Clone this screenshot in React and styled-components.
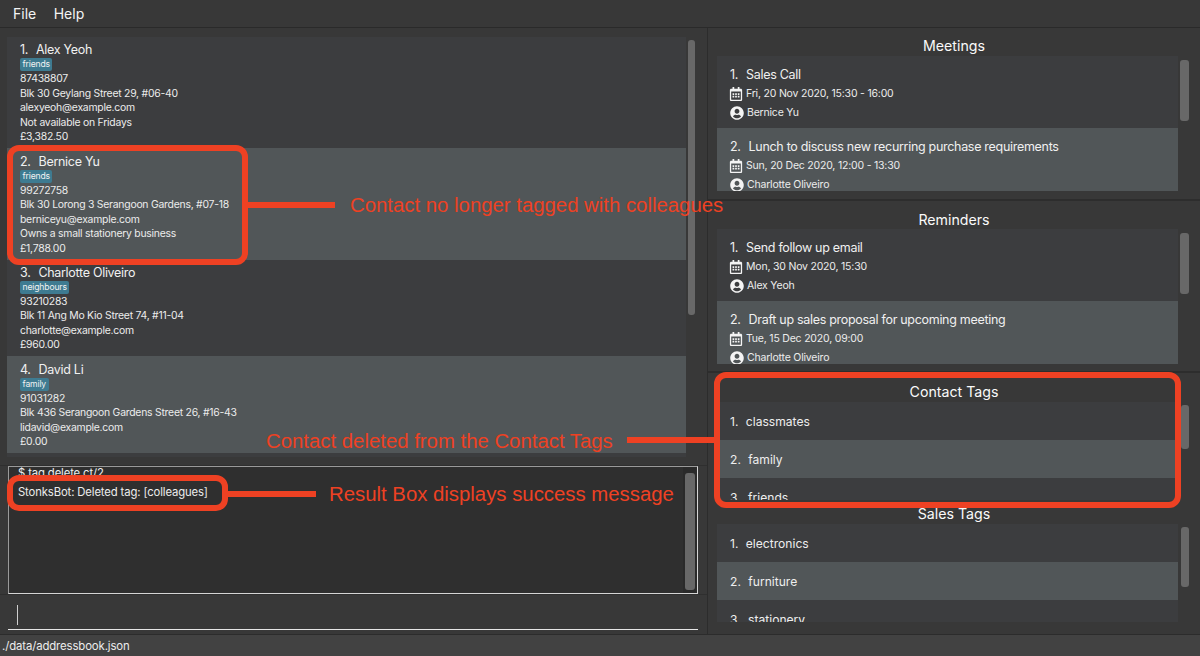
import React from 'react';
import styled, { createGlobalStyle } from 'styled-components';
import { FaRegCalendarAlt, FaUserCircle } from 'react-icons/fa';

const GlobalStyle = createGlobalStyle`
  html, body {
    margin: 0;
    padding: 0;
    background: #383838;
    overflow: hidden;
  }
  * { box-sizing: border-box; }
`;

const Window = styled.div`
  position: relative;
  width: 1200px;
  height: 656px;
  display: flex;
  flex-direction: column;
  background: #383838;
  color: #f0f0f0;
  font-family: Inter, "Liberation Sans", sans-serif;
  overflow: hidden;
`;

const MenuBar = styled.div`
  flex: none;
  height: 28px;
  display: flex;
  align-items: center;
  gap: 17.5px;
  padding: 0 0 1px 13px;
  border-bottom: 1px solid #2a2a2a;
  font-size: 14px;
  color: #f4f4f4;
`;

const Main = styled.div`
  flex: 1;
  min-height: 0;
  display: flex;
`;

const LeftColumn = styled.div`
  flex: none;
  width: 708px;
  display: flex;
  flex-direction: column;
  border-right: 1px solid #2c2c2c;
`;

const PersonPane = styled.div`
  flex: none;
  height: 438px;
  display: flex;
  padding: 9px 10px 0 7px;
  border-bottom: 1px solid #2f2f2f;
`;

const PersonList = styled.div`
  flex: none;
  width: 679px;
  height: 420px;
  background: #3c3d3f;
  overflow: hidden;
`;

const Track = styled.div`
  flex: 1;
  padding: ${p => p.$top}px ${p => p.$right}px 0 ${p => p.$left}px;
`;

const Thumb = styled.div`
  height: ${p => p.$height}px;
  background: #686868;
  border-radius: 3px;
`;

const PersonRow = styled.div`
  padding: 4.3px 0 3.5px 13px;
  background: ${p => (p.$alt ? '#515658' : '#3c3d3f')};
`;

const RowTitle = styled.div`
  font-size: 12.5px;
  line-height: 17px;
  letter-spacing: -0.3px;
  color: #f0f0f0;
  white-space: pre;
`;

const EventTitle = styled(RowTitle)`
  line-height: 19px;
`;

const Index = styled.span`
  margin-right: ${p => p.$gap}px;
`;

const TagChip = styled.span`
  display: block;
  width: fit-content;
  height: 13px;
  margin-bottom: 1px;
  padding: 0 2.5px;
  background: #3e7b91;
  border-radius: 2px;
  font-size: 8.6px;
  line-height: 13px;
  letter-spacing: -0.15px;
  color: #f2f2f2;
`;

const Detail = styled.div`
  font-size: 10.4px;
  line-height: 14.5px;
  letter-spacing: -0.24px;
  color: #ececec;
  white-space: nowrap;
`;

const ResultPane = styled.div`
  flex: none;
  height: 128px;
  margin-left: 8px;
  margin-right: 9px;
  display: flex;
  background: #2f2f2f;
  border: 1px solid #9a9a9a;
  border-bottom-color: #d5d5d5;
  border-right-color: #d5d5d5;
`;

const ResultText = styled.div`
  flex: 1;
  display: flex;
  flex-direction: column;
  gap: 6px;
  padding-left: 9px;
  font-size: 11.3px;
  line-height: 13px;
  letter-spacing: -0.13px;
  color: #ececec;
`;

const ResultTrack = styled.div`
  flex: none;
  width: 14px;
  background: #2a2a2a;
  padding: 6px 2px 3px 2px;
`;

const ResultThumb = styled.div`
  height: 100%;
  background: #686868;
  border-radius: 3px;
`;

const CommandPane = styled.div`
  flex: 1;
  padding: 0 9px 5px 8px;
  border-top: 1px solid #2f2f2f;
`;

const CommandField = styled.div`
  height: 35px;
  padding: 10px 0 4px 9px;
  border-bottom: 1px solid #e6e6e6;
`;

const Caret = styled.div`
  width: 1px;
  height: 20px;
  background: #cfcfcf;
`;

const RightColumn = styled.div`
  flex: 1;
  min-width: 0;
  display: flex;
  flex-direction: column;
`;

const Section = styled.section`
  flex: none;
  height: ${p => p.$height}px;
  padding-left: 9px;
  border-bottom: ${p => (p.$divided ? '2px solid #2d2d2d' : 'none')};
`;

const SectionTitle = styled.div`
  height: ${p => p.$height}px;
  padding-top: ${p => p.$pad}px;
  padding-right: 9px;
  text-align: center;
  font-size: 14.2px;
  line-height: 19px;
  color: #fafafa;
`;

const SectionBody = styled.div`
  display: flex;
  height: ${p => p.$height}px;
`;

const CardList = styled.div`
  flex: none;
  width: 461px;
  background: #3c3d3f;
  overflow: hidden;
`;

const EventRow = styled.div`
  height: 72px;
  padding: 9px 0 0 13px;
  background: ${p => (p.$alt ? '#515658' : '#3c3d3f')};
`;

const MetaLine = styled.div`
  display: flex;
  align-items: center;
  gap: 3px;
  height: 19px;
  font-size: 10.5px;
  letter-spacing: -0.2px;
  color: #ececec;
  svg { flex: none; color: #f4f4f4; }
`;

const CalendarIcon = styled(FaRegCalendarAlt)`
  margin-left: -1px;
`;

const TagRow = styled.div`
  height: 38px;
  padding-left: 13px;
  display: flex;
  align-items: center;
  font-size: 12.1px;
  color: #eeeeee;
  white-space: pre;
  background: ${p => (p.$alt ? '#515658' : '#3c3d3f')};
`;

const StatusBar = styled.div`
  flex: none;
  height: 22px;
  padding-left: 2px;
  display: flex;
  align-items: center;
  background: #424242;
  border-top: 1px solid #2c2c2c;
  font-size: 11.4px;
  letter-spacing: -0.13px;
  color: #ececec;
`;

const HighlightBox = styled.div`
  position: absolute;
  left: ${p => p.$x}px;
  top: ${p => p.$y}px;
  width: ${p => p.$w}px;
  height: ${p => p.$h}px;
  border: 6px solid #ee4123;
  border-radius: 12px;
`;

const Connector = styled.div`
  position: absolute;
  left: ${p => p.$x}px;
  top: ${p => p.$y}px;
  width: ${p => p.$w}px;
  height: 6px;
  background: #ee4123;
`;

const Callout = styled.div`
  position: absolute;
  left: ${p => p.$x}px;
  top: ${p => p.$y}px;
  font-family: "Liberation Sans", Arial, sans-serif;
  font-size: 20.35px;
  line-height: 24px;
  white-space: nowrap;
  color: #ee4123;
`;

const people = [
  { name: 'Alex Yeoh', tag: 'friends', phone: '87438807', address: 'Blk 30 Geylang Street 29, #06-40', email: 'alexyeoh@example.com', remark: 'Not available on Fridays', amount: '£3,382.50' },
  { name: 'Bernice Yu', tag: 'friends', phone: '99272758', address: 'Blk 30 Lorong 3 Serangoon Gardens, #07-18', email: 'berniceyu@example.com', remark: 'Owns a small stationery business', amount: '£1,788.00' },
  { name: 'Charlotte Oliveiro', tag: 'neighbours', phone: '93210283', address: 'Blk 11 Ang Mo Kio Street 74, #11-04', email: 'charlotte@example.com', amount: '£960.00' },
  { name: 'David Li', tag: 'family', phone: '91031282', address: 'Blk 436 Serangoon Gardens Street 26, #16-43', email: 'lidavid@example.com', amount: '£0.00' },
];

const meetings = [
  { title: 'Sales Call', when: 'Fri, 20 Nov 2020, 15:30 - 16:00', who: 'Bernice Yu' },
  { title: 'Lunch to discuss new recurring purchase requirements', when: 'Sun, 20 Dec 2020, 12:00 - 13:30', who: 'Charlotte Oliveiro' },
];

const reminders = [
  { title: 'Send follow up email', when: 'Mon, 30 Nov 2020, 15:30', who: 'Alex Yeoh' },
  { title: 'Draft up sales proposal for upcoming meeting', when: 'Tue, 15 Dec 2020, 09:00', who: 'Charlotte Oliveiro' },
];

function EventList({ items }) {
  return (
    <CardList>
      {items.map((item, i) => (
        <EventRow key={item.title} $alt={i % 2 === 1}>
          <EventTitle><Index $gap={1.5}>{`${i + 1}.  `}</Index>{item.title}</EventTitle>
          <MetaLine><CalendarIcon size={14} />{item.when}</MetaLine>
          <MetaLine><FaUserCircle size={14} />{item.who}</MetaLine>
        </EventRow>
      ))}
    </CardList>
  );
}

function TagList({ tags }) {
  return (
    <CardList>
      {tags.map((tag, i) => (
        <TagRow key={tag} $alt={i % 2 === 1}><Index $gap={0.6}>{`${i + 1}.  `}</Index>{tag}</TagRow>
      ))}
    </CardList>
  );
}

export default function App() {
  return (
    <Window>
      <GlobalStyle />
      <MenuBar>
        <span>File</span>
        <span>Help</span>
      </MenuBar>
      <Main>
        <LeftColumn>
          <PersonPane>
            <PersonList>
              {people.map((p, i) => (
                <PersonRow key={p.name} $alt={i % 2 === 1}>
                  <RowTitle><Index $gap={1.5}>{`${i + 1}.  `}</Index>{p.name}</RowTitle>
                  <TagChip>{p.tag}</TagChip>
                  <Detail>{p.phone}</Detail>
                  <Detail>{p.address}</Detail>
                  <Detail>{p.email}</Detail>
                  {p.remark && <Detail>{p.remark}</Detail>}
                  <Detail>{p.amount}</Detail>
                </PersonRow>
              ))}
            </PersonList>
            <Track $top={3} $left={2} $right={2}><Thumb $height={275} /></Track>
          </PersonPane>
          <ResultPane>
            <ResultText>
              <div>$ tag delete ct/2</div>
              <div>StonksBot: Deleted tag: [colleagues]</div>
            </ResultText>
            <ResultTrack><ResultThumb /></ResultTrack>
          </ResultPane>
          <CommandPane>
            <CommandField><Caret /></CommandField>
          </CommandPane>
        </LeftColumn>
        <RightColumn>
          <Section $height={173} $divided>
            <SectionTitle $height={28} $pad={8}>Meetings</SectionTitle>
            <SectionBody $height={135}>
              <EventList items={meetings} />
              <Track $top={4} $left={2} $right={11}><Thumb $height={61} /></Track>
            </SectionBody>
          </Section>
          <Section $height={172} $divided>
            <SectionTitle $height={28} $pad={9}>Reminders</SectionTitle>
            <SectionBody $height={135}>
              <EventList items={reminders} />
              <Track $top={4} $left={2} $right={11}><Thumb $height={61} /></Track>
            </SectionBody>
          </Section>
          <Section $height={127}>
            <SectionTitle $height={29} $pad={9}>Contact Tags</SectionTitle>
            <SectionBody $height={98}>
              <TagList tags={['classmates', 'family', 'friends']} />
              <Track $top={3} $left={3} $right={11}><Thumb $height={44} /></Track>
            </SectionBody>
          </Section>
          <Section $height={127}>
            <SectionTitle $height={24} $pad={4}>Sales Tags</SectionTitle>
            <SectionBody $height={98}>
              <TagList tags={['electronics', 'furniture', 'stationery']} />
              <Track $top={3} $left={3} $right={11}><Thumb $height={60} /></Track>
            </SectionBody>
          </Section>
        </RightColumn>
      </Main>
      <StatusBar>./data/addressbook.json</StatusBar>

      <HighlightBox $x={7} $y={145} $w={241} $h={120} />
      <Connector $x={248} $y={202} $w={87} />
      <Callout $x={350} $y={193}>Contact no longer tagged with colleagues</Callout>

      <HighlightBox $x={714} $y={372} $w={467} $h={136} />
      <Connector $x={627} $y={437} $w={87} />
      <Callout $x={266} $y={429}>Contact deleted from the Contact Tags</Callout>

      <HighlightBox $x={7} $y={475} $w={221} $h={36} />
      <Connector $x={228} $y={491} $w={88} />
      <Callout $x={329} $y={482}>Result Box displays success message</Callout>
    </Window>
  );
}
